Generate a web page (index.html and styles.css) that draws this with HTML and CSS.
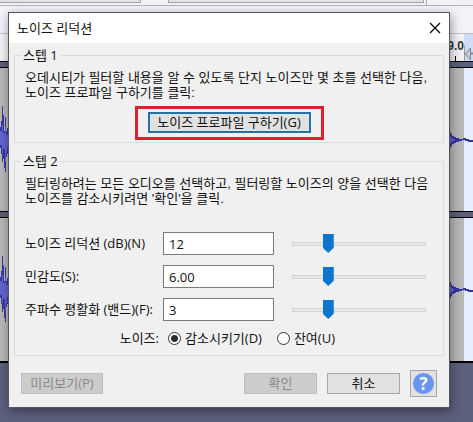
FILE: index.html
```
<!DOCTYPE html>
<html lang="ko">
<head>
<meta charset="utf-8">
<meta name="viewport" content="width=device-width, initial-scale=1">
<title>노이즈 리덕션</title>
<link rel="stylesheet" href="styles.css">
</head>
<body>
<div class="editor">
  <div class="toolbar">
    <div class="tool-row"><span class="tool-a"></span><span class="tool-b"></span><span class="tool-c"></span></div>
  </div>
  <div class="ruler">
    <div class="ruler-selected"><span class="tick-label">9.0</span></div>
    <div class="ruler-rest">
      <svg width="9" height="17" viewBox="0 0 9 17"><path d="M.5 0v17" stroke="#9a9ca2"/><path d="M6.500 2v12L1 8z" fill="#c4c6ca" stroke="#85888f"/><path d="M7 7.500h2" stroke="#85888f" stroke-width="2"/></svg>
    </div>
  </div>
  <div class="divider"></div>
  <div class="track">
    <svg class="wave-left" width="9" height="70" viewBox="0 0 9 70"><path d="M0 22h1v-6h1V1h1v9h1v16h1V12h1v14h1v-3h1v-5h1v36h-1v-5h-1v3H6v15H5v-4H4v-9H3v3H2v-8H1v-6H0z" fill="#3b3ba5"/><path d="M0 26h2v-6h1v8h2v-6h1v8h2v-4h1v20H8v-4H7v6H6v8H5v-12H3v4H2v-8H0z" fill="#6464d2"/></svg>
    <svg class="wave-right" width="24" height="22" viewBox="0 0 24 22"><path d="M0 1h1v2h1v2h1v2h2v1h2v1h3v1h4v-1h3v1h3v1h4v2h-5v-1h-3v-1h-3v1h-3v1H7v1H5v1H3v2H2v2H1v3H0z" fill="#3535a2"/><path d="M0 6l3 3 3 2-3 2-3 3z" fill="#6464d2"/></svg>
  </div>
  <div class="divider"></div>
  <div class="track">
    <svg class="wave-left" width="9" height="70" viewBox="0 0 9 70"><path d="M0 22h1v-6h1V1h1v9h1v16h1V12h1v14h1v-3h1v-5h1v36h-1v-5h-1v3H6v15H5v-4H4v-9H3v3H2v-8H1v-6H0z" fill="#3b3ba5"/><path d="M0 26h2v-6h1v8h2v-6h1v8h2v-4h1v20H8v-4H7v6H6v8H5v-12H3v4H2v-8H0z" fill="#6464d2"/></svg>
    <svg class="wave-right" width="24" height="22" viewBox="0 0 24 22"><path d="M0 1h1v2h1v2h1v2h2v1h2v1h3v1h4v-1h3v1h3v1h4v2h-5v-1h-3v-1h-3v1h-3v1H7v1H5v1H3v2H2v2H1v3H0z" fill="#3535a2"/><path d="M0 6l3 3 3 2-3 2-3 3z" fill="#6464d2"/></svg>
  </div>
  <div class="empty-area"></div>
</div>

<main class="dialog" role="dialog" aria-labelledby="dialog-title">
  <header class="titlebar">
    <h1 id="dialog-title">노이즈 리덕션</h1>
    <button class="close" type="button" aria-label="닫기">
      <svg width="12" height="12" viewBox="0 0 12 12"><path d="M1 1l10 10M11 1L1 11" stroke="#000" stroke-width="1.200"/></svg>
    </button>
  </header>
  <form class="content">
    <fieldset class="step">
      <legend>스텝 1</legend>
      <p>오데시티가 필터할 내용을 알 수 있도록 단지 노이즈만 몇 초를 선택한 다음,<br>노이즈 프로파일 구하기를 클릭:</p>
      <div class="highlight"><button class="profile" type="button">노이즈 프로파일 구하기(G)</button></div>
    </fieldset>
    <fieldset class="step step-two">
      <legend>스텝 2</legend>
      <p>필터링하려는 모든 오디오를 선택하고, 필터링할 노이즈의 양을 선택한 다음<br>노이즈를 감소시키려면 '확인'을 클릭.</p>
      <div class="settings">
        <label for="reduction">노이즈 리덕션 (dB)(N)</label>
        <input class="value" id="reduction" type="text" value="12">
        <input class="slider" type="range" value="25" aria-label="노이즈 리덕션">
        <label for="sensitivity">민감도(S):</label>
        <input class="value" id="sensitivity" type="text" value="6.00">
        <input class="slider" type="range" value="25" aria-label="민감도">
        <label for="smoothing">주파수 평활화 (밴드)(F):</label>
        <input class="value" id="smoothing" type="text" value="3">
        <input class="slider" type="range" value="25" aria-label="주파수 평활화">
      </div>
      <div class="modes">
        <span class="modes-label">노이즈:</span>
        <label><input type="radio" name="mode" checked>감소시키기(D)</label>
        <label><input type="radio" name="mode">잔여(U)</label>
      </div>
    </fieldset>
    <footer class="actions">
      <button class="action preview" type="button" disabled>미리보기(P)</button>
      <button class="action" type="button" disabled>확인</button>
      <button class="action" type="button">취소</button>
      <button class="help" type="button" aria-label="도움말"><span>?</span></button>
    </footer>
  </form>
</main>
</body>
</html>
```

FILE: styles.css
```
* { box-sizing: border-box; }

body {
  margin: 0;
  min-height: 100vh;
  position: relative;
  padding: 12px 23px 12px 8px;
  font: 13px/15px "Open Sans", "Noto Sans CJK KR", sans-serif;
  color: #111;
  overflow: hidden;
}

button, input { font: inherit; color: inherit; margin: 0; }

/* Editor window behind the dialog */
.editor {
  position: absolute;
  inset: 0;
  display: flex;
  flex-direction: column;
  background: #5c607d;
}

.toolbar { height: 34px; background: #f2f2f8; border-bottom: 1px solid #c4c4ca; }
.tool-row {
  display: flex;
  height: 6px;
  border-bottom: 1px solid #b4b4b8;
}
.tool-a, .tool-b { height: 3px; background: #e2e2e4; border-bottom: 1px solid #a2a2a6; border-right: 1px solid #a2a2a6; }
.tool-a { flex: 141; }
.tool-b { flex: 256; margin-left: 27px; border-left: 1px solid #a2a2a6; }
.tool-c { flex: 46; margin-left: 2px; border-left: 1px solid #b4b4b8; }

.ruler { display: flex; height: 27px; background: #f2f2f6; }
.ruler-selected {
  flex: 1;
  display: flex;
  justify-content: flex-end;
  background: linear-gradient(#000, #000) right 8px bottom / 1px 5px no-repeat;
}
.tick-label { font: bold 12px/24px "Liberation Sans", sans-serif; color: #333; }
.ruler-rest { width: 9px; background: #cfdcf8; padding-top: 12px; }
.ruler-rest svg { display: block; }

.divider {
  height: 7px;
  background: #5c607d;
  border: solid #000;
  border-width: 1px 0;
}
.track {
  height: 143px;
  display: flex;
  justify-content: space-between;
  align-items: center;
  background: linear-gradient(#e6efff, #e6efff) right / 9px 100% no-repeat #b8b8b8;
}
.empty-area { flex: 1; border-top: 2px solid #000; }

/* Dialog */
.dialog {
  position: relative;
  background: #f0f0f0;
  border: 1px solid #55565c;
  box-shadow: 1px 3px 10px rgba(0, 0, 0, 0.4);
}

.titlebar {
  height: 30px;
  display: flex;
  align-items: center;
  justify-content: space-between;
  padding: 0 8px;
  background: #fff;
}
.titlebar h1 { margin: 0; font: inherit; }
.close { display: flex; padding: 0; border: 0; background: none; }

.content { padding: 4px 5px 10px; }

.step {
  margin: 0;
  min-width: 0;
  padding: 7px 10px 2px;
  border: 1px solid #dcdcdc;
}
.step legend { margin-left: -4px; padding: 0 2px; line-height: 16px; }
.step p {
  margin: 0;
  font-family: "Liberation Sans", "Noto Sans CJK KR", sans-serif;
  white-space: nowrap;
}
.step-two { margin-top: 10px; padding-bottom: 9px; }

.highlight {
  width: fit-content;
  margin: 6px auto 0;
  padding: 3px 10px 4px;
  border: 3px solid #db222c;
}
.profile {
  display: block;
  width: 163px;
  height: 21px;
  padding: 0;
  line-height: 15px;
  border: 2px solid #2a719f;
  background: #e1e1e1;
  box-shadow: inset 0 0 0 1px #cdeaf8;
  white-space: nowrap;
}

.settings {
  display: grid;
  grid-template-columns: 138px 111px 1fr;
  row-gap: 10px;
  align-items: center;
  margin-top: 26px;
  white-space: nowrap;
}
.value {
  width: 100%;
  height: 23px;
  padding: 0 5px;
  border: 1px solid #7a7a7a;
  background: #fff;
}

.slider {
  appearance: none;
  min-width: 0;
  height: 19px;
  margin: 0 7px 0 18px;
  background: none;
}
.slider::-webkit-slider-runnable-track {
  height: 19px;
  background:
    linear-gradient(#e8e8e8, #e8e8e8) center / calc(100% - 2px) 2px no-repeat,
    linear-gradient(#d4d4d4, #d4d4d4) center / 100% 4px no-repeat;
}
.slider::-webkit-slider-thumb {
  appearance: none;
  width: 11px;
  height: 19px;
  background: #0c76cc;
  clip-path: polygon(0 0, 100% 0, 100% 72%, 50% 100%, 0 72%);
}

.modes { display: flex; align-items: center; height: 16px; margin-top: 9px; white-space: nowrap; }
.modes-label { width: 143px; padding-right: 9px; text-align: right; }
.modes label { display: flex; align-items: center; gap: 4px; margin-right: 15px; }
.modes input {
  appearance: none;
  width: 13px;
  height: 13px;
  border: 1px solid #333;
  border-radius: 50%;
  background: #fff;
}
.modes input:checked { background: radial-gradient(circle, #2b2b2b 3px, #fff 4px); }

.actions { display: flex; align-items: center; gap: 10px; margin-top: 14px; padding: 0 7px; }
.action {
  width: 73px;
  height: 21px;
  padding: 0;
  line-height: 15px;
  border: 1px solid #a8a8a8;
  background: #e1e1e1;
}
.action:disabled { background: #ccc; border-color: #bfbfbf; color: #8a8a8a; }
.preview { width: 82px; margin-right: auto; }
.help {
  display: grid;
  place-items: center;
  width: 27px;
  height: 27px;
  padding: 0;
  border: 1px solid #a8a8a8;
  background: #e1e1e1;
}
.help span {
  width: 21px;
  height: 21px;
  border-radius: 50%;
  background: #6895f0;
  color: #fff;
  font: bold 17px/21px "Open Sans", sans-serif;
}
```
